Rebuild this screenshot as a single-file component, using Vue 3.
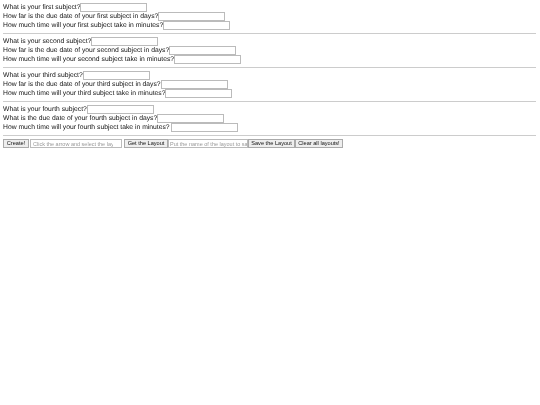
<script setup>
const subjects = [
  { name: 'first', due: 'How far is the due date of your first subject in days?', time: 'How much time will your first subject take in minutes?' },
  { name: 'second', due: 'How far is the due date of your second subject in days?', time: 'How much time will your second subject take in minutes?' },
  { name: 'third', due: 'How far is the due date of your third subject in days?', time: 'How much time will your third subject take in minutes?' },
  { name: 'fourth', due: 'What is the due date of your fourth subject in days?', time: 'How much time will your fourth subject take in minutes?\u00a0' },
];
</script>

<template>
  <div class="page">
    <section v-for="s in subjects" :key="s.name" class="subject">
      <div class="row">What is your {{ s.name }} subject?<input class="field" type="text" /></div>
      <div class="row">{{ s.due }}<input class="field" type="text" /></div>
      <div class="row">{{ s.time }}<input class="field" type="text" /></div>
    </section>
    <div class="controls">
      <button class="btn create">Create!</button>
      <input class="control-input layout-pick" type="text" placeholder="Click the arrow and select the layout" />
      <button class="btn get">Get the Layout</button>
      <input class="control-input layout-name" type="text" placeholder="Put the name of the layout to save" />
      <button class="btn save">Save the Layout</button>
      <button class="btn clear">Clear all layouts!</button>
    </div>
  </div>
</template>

<style scoped>
.page {
  padding: 3px 4px 0 3px;
  font-family: "Liberation Sans", Arial, sans-serif;
  font-size: 6.77px;
  color: #111;
  text-rendering: geometricPrecision;
  will-change: transform;
}

.subject {
  border-bottom: 1px solid #ccc;
  padding-bottom: 3px;
  margin-bottom: 3px;
}

.row {
  display: flex;
  align-items: center;
  height: 9px;
  white-space: pre;
}

.field {
  width: 67px;
  height: 9px;
  box-sizing: border-box;
  border: 1px solid #bbb;
  background: #fff;
  padding: 0;
}

.controls {
  display: flex;
  align-items: center;
  height: 9px;
  margin-top: 1px;
}

.btn {
  height: 9px;
  box-sizing: border-box;
  border: 1px solid #aaa;
  background: #eee;
  padding: 0;
  font-family: inherit;
  font-size: 5.6px;
  line-height: 1;
  color: #111;
  white-space: nowrap;
}

.create { width: 26px; }
.get { width: 44px; margin-left: 2px; }
.save { width: 47px; }
.clear { width: 48px; }

.control-input {
  height: 9px;
  box-sizing: border-box;
  border: 1px solid #bbb;
  padding: 0 1px;
  font-family: inherit;
  font-size: 5.5px;
}

.control-input::placeholder {
  color: #999;
}

.layout-pick {
  width: 92px;
  margin-left: 1px;
  padding: 0 8px 0 2px;
}

.layout-name {
  width: 80px;
  padding: 0 0 0 1px;
}
</style>
